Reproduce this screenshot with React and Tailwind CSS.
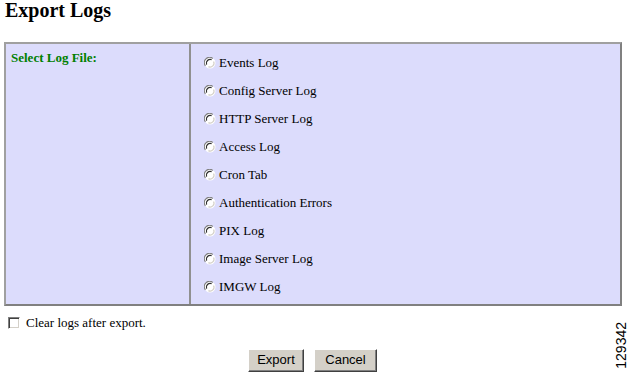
const LOGS = [
  'Events Log',
  'Config Server Log',
  'HTTP Server Log',
  'Access Log',
  'Cron Tab',
  'Authentication Errors',
  'PIX Log',
  'Image Server Log',
  'IMGW Log',
];

function Radio() {
  return (
    <svg width="12" height="12" viewBox="0 0 12 12" className="shrink-0">
      <circle cx="6" cy="6" r="5.5" fill="#ffffff" />
      <path d="M1.4 8.8 A5.3 5.3 0 0 1 8.8 1.4" stroke="#808080" strokeWidth="1.2" fill="none" />
      <path d="M2.6 7.6 A3.9 3.9 0 0 1 7.6 2.6" stroke="#303030" strokeWidth="1.2" fill="none" />
      <path d="M9.6 4.4 A3.9 3.9 0 0 1 4.4 9.6" stroke="#d4d0c8" strokeWidth="1.2" fill="none" />
    </svg>
  );
}

function Button({ label, width }) {
  return (
    <button
      className={`${width} h-[23px] bg-[#d4d0c8] border border-t-white border-l-white border-r-[#404040] border-b-[#404040] shadow-[inset_-1px_-1px_0_#808080] text-[13px] text-black font-['Liberation_Sans',Arial,sans-serif]`}
    >
      {label}
    </button>
  );
}

export default function App() {
  return (
    <div className="relative w-[629px] h-[377px] bg-white font-['Liberation_Serif','Times_New_Roman',serif] text-black">
      <h1 className="pl-[5px] text-[20px] leading-[21px] font-bold">Export Logs</h1>

      <div className="mt-[21px] ml-[4px] w-[618px] h-[264px] flex bg-[#dcdcfc] border-2 border-t-[#a0a0a0] border-l-[#a0a0a0] border-r-[#808080] border-b-[#808080]">
        <div className="w-[185px] border-r-2 border-[#909090] pl-[5px] pt-[1px]">
          <span className="text-[13px] font-bold text-[#008000]">Select Log File:</span>
        </div>
        <div className="flex-1 flex flex-col pt-[5px] pl-[13px]">
          {LOGS.map((name) => (
            <label key={name} className="h-[28px] flex items-center gap-[3px] text-[13px]">
              <Radio />
              <span>{name}</span>
            </label>
          ))}
        </div>
      </div>

      <label className="flex items-center gap-[6px] mt-[7px] ml-[8px] text-[13px]">
        <span className="w-[12px] h-[12px] bg-white border border-t-[#808080] border-l-[#808080] border-r-white border-b-white shadow-[inset_1px_1px_0_#404040,inset_-1px_-1px_0_#d4d0c8]" />
        <span>Clear logs after export.</span>
      </label>

      <div className="flex gap-[10px] mt-[16px] ml-[248px]">
        <Button label="Export" width="w-[56px]" />
        <Button label="Cancel" width="w-[63px]" />
      </div>

      <div className="absolute left-[614px] top-[322px] text-[14px] leading-[14px] font-['Liberation_Sans',Arial,sans-serif] [writing-mode:vertical-rl] rotate-180">
        129342
      </div>
    </div>
  );
}
